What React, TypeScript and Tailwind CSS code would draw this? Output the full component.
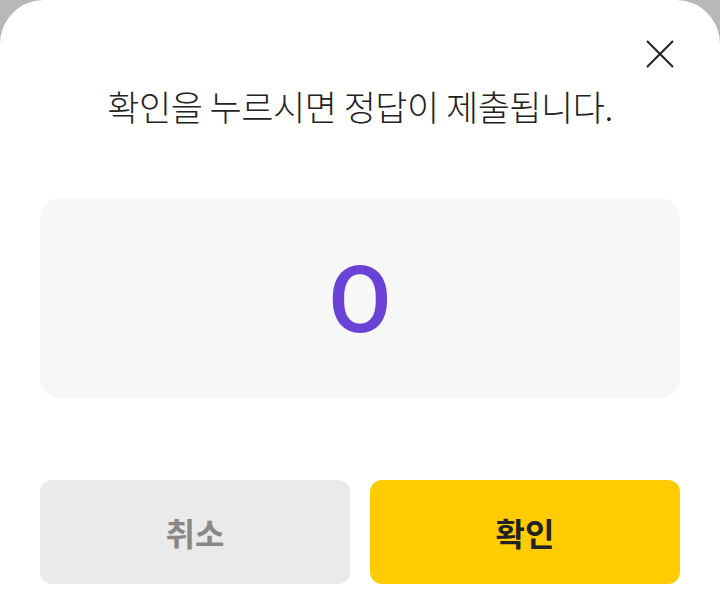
import React from 'react';

const font = { fontFamily: '"Noto Sans CJK KR", "Noto Sans", sans-serif' };

export default function App() {
  return (
    <div className="w-[720px] h-[604px] bg-[#b8b8b8] overflow-hidden" style={font}>
      <div className="h-full bg-white rounded-t-[44px] flex flex-col px-10">
        {/* Close */}
        <div className="flex justify-end pt-[40px] mr-[6px]">
          <button className="w-[28px] h-[28px] flex items-center justify-center">
            <svg width="28" height="28" viewBox="0 0 28 28" fill="none" stroke="#222" strokeWidth="2">
              <path d="M1 1 L27 27 M27 1 L1 27" />
            </svg>
          </button>
        </div>

        <p className="mt-[16px] text-center text-[35px] leading-[44px] font-light text-[#222] tracking-[-0.5px]">
          확인을 누르시면 정답이 제출됩니다.
        </p>

        <div className="mt-[70px] h-[200px] rounded-[20px] bg-[#f7f7f7] flex items-center justify-center">
          <span className="pt-[6px] text-[92px] leading-none font-medium text-[#6b42d6]" style={{ fontFamily: 'Roboto, "Noto Sans", sans-serif' }}>
            O
          </span>
        </div>

        <div className="mt-[82px] grid grid-cols-2 gap-5">
          <button className="h-[104px] rounded-[12px] bg-[#eaeaea] text-[32px] font-bold text-[#888]">취소</button>
          <button className="h-[104px] rounded-[12px] bg-[#ffcc00] text-[32px] font-bold text-[#222]">확인</button>
        </div>
      </div>
    </div>
  );
}
